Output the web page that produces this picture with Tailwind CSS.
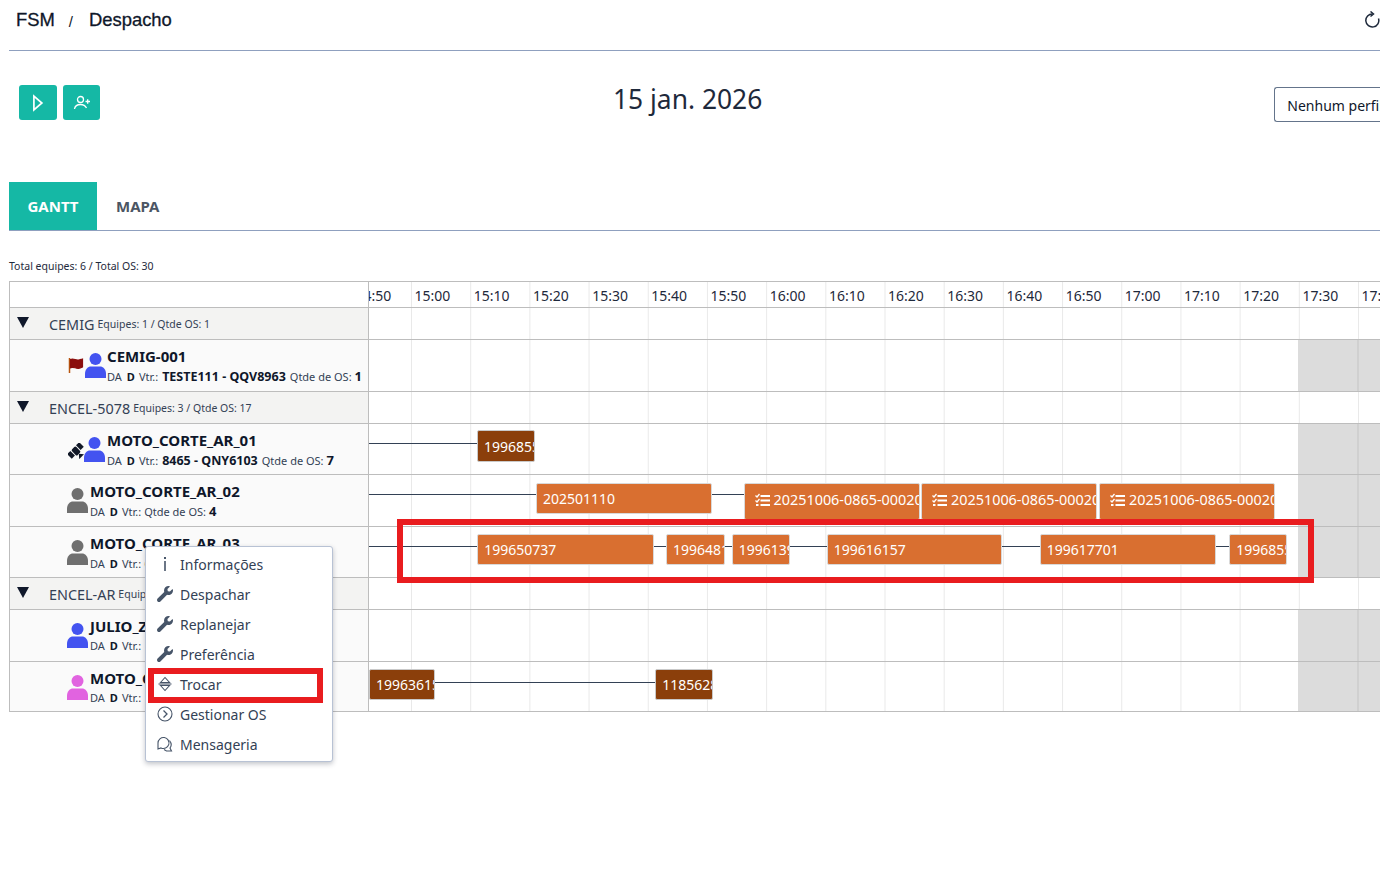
<!DOCTYPE html>
<html lang="pt-BR">
	<head>
		<meta charset="UTF-8" />
		<title>FSM - Despacho</title>
		<script src="https://cdn.jsdelivr.net/npm/@tailwindcss/browser@4"></script>
	</head>
	<body class="relative w-[1380px] h-[872px] overflow-hidden bg-white font-['Noto_Sans',sans-serif] text-[#0f172a]">
		<!-- breadcrumb -->
		<div class="ml-[9px] h-[51px] border-b border-[#8fa0bf] flex items-start pt-[8px] pl-[7px] font-['Liberation_Sans',sans-serif] text-[18.4px] leading-[24px] [-webkit-text-stroke:0.3px_#0f172a]">
			<span>FSM</span>
			<span class="ml-[14px] text-[15px] [-webkit-text-stroke:0px] pt-[2px]">/</span>
			<span class="ml-[16px]">Despacho</span>
			<svg class="ml-auto mt-[3px] mr-[-1px] w-[18px] h-[18px] shrink-0" viewBox="0 0 18 18" fill="none" stroke="#1e293b" stroke-width="1.5"><path d="M9.500 3A6.500 6.500 0 1 0 15.500 7.500" /><path d="M7.500 .5l3 2.500-3 2.500" /></svg>
		</div>

		<!-- toolbar -->
		<div class="flex h-[131px] pl-[19px] items-start">
			<button class="mt-[34px] w-[38px] h-[35px] shrink-0 rounded-[3px] bg-[#15b8a5] flex items-center justify-center">
				<svg class="w-[14px] h-[18px]" viewBox="0 0 14 18" fill="none" stroke="white" stroke-width="1.700"><path d="M2.900 2v14l8-7z" /></svg>
			</button>
			<button class="mt-[34px] ml-[6px] w-[37px] h-[35px] shrink-0 rounded-[3px] bg-[#15b8a5] flex items-center justify-center">
				<svg class="w-[18px] h-[16px]" viewBox="0 0 18 16" fill="none" stroke="white" stroke-width="1.300"><circle cx="7.500" cy="4.500" r="3" /><path d="M1.500 14c.5-3 3-4.500 6-4.500s5 1.500 6 3.500" /><path d="M12.500 6.500h4.500M14.700 4.300v4.500" /></svg>
			</button>
			<div class="ml-[513px] mt-[30px] text-[26.400px] leading-[36px] text-[#1e293b] whitespace-nowrap shrink-0">15 jan. 2026</div>
			<div class="ml-[512px] mt-[36px] w-[106px] h-[35px] shrink-0 border border-r-0 border-[#64748b] rounded-l-[3px] pl-[12px] pt-[1px] flex items-center text-[14px] whitespace-nowrap overflow-hidden">Nenhum perfil selecionado</div>
		</div>

		<!-- tabs -->
		<div class="ml-[9px] h-[49px] border-b border-[#8fa0bf] flex text-[15px] font-bold">
			<div class="w-[88px] bg-[#15b8a5] text-white flex items-center justify-center">GANTT</div>
			<div class="ml-[19px] flex items-center text-[#4b5563]">MAPA</div>
		</div>

		<div class="ml-[9px] mt-[28px] h-[14px] text-[10.500px] leading-[14px] text-[#1e293b]">Total equipes: 6 / Total OS: 30</div>

		<!-- gantt -->
		<div class="ml-[9px] mt-[8px] border-t border-l border-[#bdbdbd]">
			<div class="flex h-[26px] border-b border-[#bdbdbd]">
				<div class="w-[359px] shrink-0 border-r border-[#bdbdbd]"></div>
				<div class="flex-1 relative overflow-hidden bg-[linear-gradient(to_right,#e9e9e9_1.3px,transparent_1.3px)] bg-[length:59.2px_100%] bg-[position:42px_0] flex text-[14px] leading-[28px] text-[#1e293b] whitespace-nowrap">
					<div class="flex ml-[-13.600px]">
						<span class="w-[59.200px] shrink-0">14:50</span>
						<span class="w-[59.200px] shrink-0">15:00</span>
						<span class="w-[59.200px] shrink-0">15:10</span>
						<span class="w-[59.200px] shrink-0">15:20</span>
						<span class="w-[59.200px] shrink-0">15:30</span>
						<span class="w-[59.200px] shrink-0">15:40</span>
						<span class="w-[59.200px] shrink-0">15:50</span>
						<span class="w-[59.200px] shrink-0">16:00</span>
						<span class="w-[59.200px] shrink-0">16:10</span>
						<span class="w-[59.200px] shrink-0">16:20</span>
						<span class="w-[59.200px] shrink-0">16:30</span>
						<span class="w-[59.200px] shrink-0">16:40</span>
						<span class="w-[59.200px] shrink-0">16:50</span>
						<span class="w-[59.200px] shrink-0">17:00</span>
						<span class="w-[59.200px] shrink-0">17:10</span>
						<span class="w-[59.200px] shrink-0">17:20</span>
						<span class="w-[59.200px] shrink-0">17:30</span>
						<span class="w-[59.200px] shrink-0">17:40</span>
					</div>
				</div>
			</div>

			<!-- CEMIG -->
			<div class="flex h-[32px] border-b border-[#bdbdbd]">
				<div class="w-[359px] shrink-0 border-r border-[#bdbdbd] bg-[#f3f3f2] flex items-center pl-[7px] pt-[2px] whitespace-nowrap">
					<svg class="w-[12px] h-[11px] mt-[-5px]" viewBox="0 0 12 11"><path d="M0 0h12L6 11z" fill="#0f172a" /></svg>
					<span class="ml-[20px] text-[14.400px] text-[#334155]">CEMIG</span>
					<span class="ml-[3px] text-[10.500px] mt-[1px] text-[#334155]">Equipes: 1 / Qtde OS: 1</span>
				</div>
				<div class="flex-1 bg-[linear-gradient(to_right,#e9e9e9_1.3px,transparent_1.3px)] bg-[length:59.2px_100%] bg-[position:42px_0]"></div>
			</div>
			<div class="flex h-[52px] border-b border-[#bdbdbd]">
				<div class="w-[359px] shrink-0 border-r border-[#bdbdbd] bg-[#fafafa] flex pl-[57px] pt-[5px] whitespace-nowrap">
					<svg class="w-[16px] h-[15px] mt-[13px] ml-[1px]" viewBox="0 0 16 15"><path d="M1.500 0v15" stroke="#b8560f" stroke-width="1.500" /><path d="M2.500 1.500c3-1.500 5 1 8 .5 1.500-.2 3-.8 4-1v8c-1.500.8-3 1.300-4 1.300-3 .3-5-2-8-.5z" fill="#8b0e0e" stroke="#8b0e0e" stroke-width="1.200" /></svg>
					<svg class="w-[21px] h-[25px] ml-[1px] mt-[8px]" viewBox="0 0 21 25"><circle cx="10.500" cy="6" r="6" fill="#4353f0" /><path d="M0 25v-4c0-5 3-7.500 6-7.500h9c3 0 6 2.500 6 7.500v4z" fill="#4353f0" /></svg>
					<div class="ml-[1px]">
						<div class="text-[15px] font-bold leading-[23px]">CEMIG-001</div>
						<div class="flex items-baseline text-[11px] leading-[16px] text-[#334155]">DA <b class="ml-[5px] text-[#0f172a]">D</b> <span class="ml-[4px]">Vtr.:</span> <b class="ml-[4px] text-[12.500px] text-[#0f172a]">TESTE111 - QQV8963</b> <span class="ml-[4px]">Qtde de OS:</span> <b class="ml-[3px] text-[13px] text-[#0f172a]">1</b></div>
					</div>
				</div>
				<div class="relative flex-1 bg-[linear-gradient(to_right,#e9e9e9_1.3px,transparent_1.3px)] bg-[length:59.2px_100%] bg-[position:42px_0]">
					<div class="absolute inset-y-0 left-[929px] right-0 bg-[#dcdcdc] flex"><div class="ml-[59px] w-[2px] bg-[#d0d0d0]"></div></div>
				</div>
			</div>

			<!-- ENCEL-5078 -->
			<div class="flex h-[32px] border-b border-[#bdbdbd]">
				<div class="w-[359px] shrink-0 border-r border-[#bdbdbd] bg-[#f3f3f2] flex items-center pl-[7px] pt-[2px] whitespace-nowrap">
					<svg class="w-[12px] h-[11px] mt-[-5px]" viewBox="0 0 12 11"><path d="M0 0h12L6 11z" fill="#0f172a" /></svg>
					<span class="ml-[20px] text-[14.400px] text-[#334155]">ENCEL-5078</span>
					<span class="ml-[3px] text-[10.500px] mt-[1px] text-[#334155]">Equipes: 3 / Qtde OS: 17</span>
				</div>
				<div class="flex-1 bg-[linear-gradient(to_right,#e9e9e9_1.3px,transparent_1.3px)] bg-[length:59.2px_100%] bg-[position:42px_0]"></div>
			</div>
			<div class="flex h-[51px] border-b border-[#bdbdbd]">
				<div class="w-[359px] shrink-0 border-r border-[#bdbdbd] bg-[#fafafa] flex pl-[57px] pt-[5px] whitespace-nowrap">
					<svg class="w-[16px] h-[16px] mt-[14px] ml-[1px]" viewBox="0 0 16 16" fill="#111827"><g transform="rotate(-45 8 8)"><rect x="5" y="4" width="6" height="8" rx="1.500" /><rect x="-.5" y="4" width="4.500" height="6.500" /><rect x="12" y="4" width="4.500" height="6.500" /><path d="M4.500 16h7l-3.500-4z" /></g></svg>
					<svg class="w-[21px] h-[25px] mt-[8px]" viewBox="0 0 21 25"><circle cx="10.500" cy="6" r="6" fill="#4353f0" /><path d="M0 25v-4c0-5 3-7.500 6-7.500h9c3 0 6 2.500 6 7.500v4z" fill="#4353f0" /></svg>
					<div class="ml-[2px]">
						<div class="text-[15px] font-bold leading-[23px]">MOTO_CORTE_AR_01</div>
						<div class="flex items-baseline text-[11px] leading-[16px] text-[#334155]">DA <b class="ml-[5px] text-[#0f172a]">D</b> <span class="ml-[4px]">Vtr.:</span> <b class="ml-[4px] text-[12.500px] text-[#0f172a]">8465 - QNY6103</b> <span class="ml-[4px]">Qtde de OS:</span> <b class="ml-[3px] text-[13px] text-[#0f172a]">7</b></div>
					</div>
				</div>
				<div class="relative flex-1 bg-[linear-gradient(to_right,#e9e9e9_1.3px,transparent_1.3px)] bg-[length:59.2px_100%] bg-[position:42px_0]">
					<div class="absolute inset-y-0 left-[929px] right-0 bg-[#dcdcdc] flex"><div class="ml-[59px] w-[2px] bg-[#d0d0d0]"></div></div>
					<div class="absolute left-0 top-[19px] w-[108px] h-[1px] bg-[#334155]"></div>
					<div class="absolute left-[108px] top-[6px] w-[58px] h-[32px] rounded-[2px] border border-[#c9c9c9] bg-[#8b3f0b] text-white text-[14px] leading-[31px] pl-[6px] overflow-hidden whitespace-nowrap">199685590</div>
				</div>
			</div>
			<div class="flex h-[52px] border-b border-[#bdbdbd]">
				<div class="w-[359px] shrink-0 border-r border-[#bdbdbd] bg-[#fafafa] flex pl-[57px] pt-[5px] whitespace-nowrap">
					<svg class="w-[21px] h-[25px] mt-[8px]" viewBox="0 0 21 25"><circle cx="10.500" cy="6" r="6" fill="#6f6f6f" /><path d="M0 25v-4c0-5 3-7.500 6-7.500h9c3 0 6 2.500 6 7.500v4z" fill="#6f6f6f" /></svg>
					<div class="ml-[2px]">
						<div class="text-[15px] font-bold leading-[23px]">MOTO_CORTE_AR_02</div>
						<div class="flex items-baseline text-[11px] leading-[16px] text-[#334155]">DA <b class="ml-[5px] text-[#0f172a]">D</b> <span class="ml-[4px]">Vtr.:</span> <span class="ml-[3px]">Qtde de OS:</span> <b class="ml-[3px] text-[13px] text-[#0f172a]">4</b></div>
					</div>
				</div>
				<div class="relative flex-1 bg-[linear-gradient(to_right,#e9e9e9_1.3px,transparent_1.3px)] bg-[length:59.2px_100%] bg-[position:42px_0]">
					<div class="absolute inset-y-0 left-[929px] right-0 bg-[#dcdcdc] flex"><div class="ml-[59px] w-[2px] bg-[#d0d0d0]"></div></div>
					<div class="absolute left-0 top-[19px] w-[375px] h-[1px] bg-[#334155]"></div>
					<div class="absolute left-[167px] top-[8px] w-[176px] h-[31px] rounded-[2px] border border-[#d9d9d9] bg-[#d96f30] text-white text-[14px] leading-[29px] pl-[6px] overflow-hidden whitespace-nowrap">202501110</div>
					<div class="absolute left-[374.500px] top-[8px] w-[176px] h-[37px] rounded-[2px] border border-[#d9d9d9] bg-[#d96f30] text-white text-[14.400px] leading-[32px] pl-[10px] overflow-hidden whitespace-nowrap flex items-start">
						<svg class="w-[15px] h-[14px] mt-[9px] mr-[4px] shrink-0" viewBox="0 0 15 14" fill="none" stroke="white" stroke-width="2"><path d="M5.500 3h9.500M5.500 7.500h9.500M5.500 12h9.500" /><path d="M.5 2.500l1.500 1.500 2.500-3" stroke-width="1.300" /><path d="M.5 7.500l1.500 1.500 2.500-3" stroke-width="1.300" /><path d="M1 12h2.500" /></svg>20251006-0865-00020
					</div>
					<div class="absolute left-[552px] top-[8px] w-[176px] h-[37px] rounded-[2px] border border-[#d9d9d9] bg-[#d96f30] text-white text-[14.400px] leading-[32px] pl-[10px] overflow-hidden whitespace-nowrap flex items-start">
						<svg class="w-[15px] h-[14px] mt-[9px] mr-[4px] shrink-0" viewBox="0 0 15 14" fill="none" stroke="white" stroke-width="2"><path d="M5.500 3h9.500M5.500 7.500h9.500M5.500 12h9.500" /><path d="M.5 2.500l1.500 1.500 2.500-3" stroke-width="1.300" /><path d="M.5 7.500l1.500 1.500 2.500-3" stroke-width="1.300" /><path d="M1 12h2.500" /></svg>20251006-0865-00020
					</div>
					<div class="absolute left-[730px] top-[8px] w-[176px] h-[37px] rounded-[2px] border border-[#d9d9d9] bg-[#d96f30] text-white text-[14.400px] leading-[32px] pl-[10px] overflow-hidden whitespace-nowrap flex items-start">
						<svg class="w-[15px] h-[14px] mt-[9px] mr-[4px] shrink-0" viewBox="0 0 15 14" fill="none" stroke="white" stroke-width="2"><path d="M5.500 3h9.500M5.500 7.500h9.500M5.500 12h9.500" /><path d="M.5 2.500l1.500 1.500 2.500-3" stroke-width="1.300" /><path d="M.5 7.500l1.500 1.500 2.500-3" stroke-width="1.300" /><path d="M1 12h2.500" /></svg>20251006-0865-00020
					</div>
				</div>
			</div>
			<div class="flex h-[51px] border-b border-[#bdbdbd]">
				<div class="w-[359px] shrink-0 border-r border-[#bdbdbd] bg-[#fafafa] flex pl-[57px] pt-[5px] whitespace-nowrap">
					<svg class="w-[21px] h-[25px] mt-[8px]" viewBox="0 0 21 25"><circle cx="10.500" cy="6" r="6" fill="#6f6f6f" /><path d="M0 25v-4c0-5 3-7.500 6-7.500h9c3 0 6 2.500 6 7.500v4z" fill="#6f6f6f" /></svg>
					<div class="ml-[2px]">
						<div class="text-[15px] font-bold leading-[23px]">MOTO_CORTE_AR_03</div>
						<div class="flex items-baseline text-[11px] leading-[16px] text-[#334155]">DA <b class="ml-[5px] text-[#0f172a]">D</b> <span class="ml-[4px]">Vtr.:</span> <span class="ml-[3px]">Qtde de OS:</span> <b class="ml-[3px] text-[13px] text-[#0f172a]">6</b></div>
					</div>
				</div>
				<div class="relative flex-1 bg-[linear-gradient(to_right,#e9e9e9_1.3px,transparent_1.3px)] bg-[length:59.2px_100%] bg-[position:42px_0]">
					<div class="absolute inset-y-0 left-[929px] right-0 bg-[#dcdcdc] flex"><div class="ml-[59px] w-[2px] bg-[#d0d0d0]"></div></div>
					<div class="absolute left-0 top-[19px] w-[860px] h-[1px] bg-[#334155]"></div>
					<div class="absolute left-[108.300px] top-[6.500px] w-[176.400px] h-[31px] rounded-[2px] border border-[#d9d9d9] bg-[#d96f30] text-white text-[14px] leading-[29px] pl-[6px] overflow-hidden whitespace-nowrap">199650737</div>
					<div class="absolute left-[297px] top-[6.500px] w-[59px] h-[31px] rounded-[2px] border border-[#d9d9d9] bg-[#d96f30] text-white text-[14px] leading-[29px] pl-[6px] overflow-hidden whitespace-nowrap">199648112</div>
					<div class="absolute left-[362.700px] top-[6.500px] w-[58.300px] h-[31px] rounded-[2px] border border-[#d9d9d9] bg-[#d96f30] text-white text-[14px] leading-[29px] pl-[6px] overflow-hidden whitespace-nowrap">199613900</div>
					<div class="absolute left-[457.700px] top-[6.500px] w-[175.600px] h-[31px] rounded-[2px] border border-[#d9d9d9] bg-[#d96f30] text-white text-[14px] leading-[29px] pl-[6px] overflow-hidden whitespace-nowrap">199616157</div>
					<div class="absolute left-[670.700px] top-[6.500px] w-[176px] h-[31px] rounded-[2px] border border-[#d9d9d9] bg-[#d96f30] text-white text-[14px] leading-[29px] pl-[6px] overflow-hidden whitespace-nowrap">199617701</div>
					<div class="absolute left-[860.300px] top-[6.500px] w-[58px] h-[31px] rounded-[2px] border border-[#d9d9d9] bg-[#d96f30] text-white text-[14px] leading-[29px] pl-[6px] overflow-hidden whitespace-nowrap">199685590</div>
				</div>
			</div>

			<!-- ENCEL-AR -->
			<div class="flex h-[32px] border-b border-[#bdbdbd]">
				<div class="w-[359px] shrink-0 border-r border-[#bdbdbd] bg-[#f3f3f2] flex items-center pl-[7px] pt-[2px] whitespace-nowrap">
					<svg class="w-[12px] h-[11px] mt-[-5px]" viewBox="0 0 12 11"><path d="M0 0h12L6 11z" fill="#0f172a" /></svg>
					<span class="ml-[20px] text-[14.400px] text-[#334155]">ENCEL-AR</span>
					<span class="ml-[3px] text-[10.500px] mt-[1px] text-[#334155]">Equipes: 2 / Qtde OS: 12</span>
				</div>
				<div class="flex-1 bg-[linear-gradient(to_right,#e9e9e9_1.3px,transparent_1.3px)] bg-[length:59.2px_100%] bg-[position:42px_0]"></div>
			</div>
			<div class="flex h-[52px] border-b border-[#bdbdbd]">
				<div class="w-[359px] shrink-0 border-r border-[#bdbdbd] bg-[#fafafa] flex pl-[57px] pt-[5px] whitespace-nowrap">
					<svg class="w-[21px] h-[25px] mt-[8px]" viewBox="0 0 21 25"><circle cx="10.500" cy="6" r="6" fill="#4353f0" /><path d="M0 25v-4c0-5 3-7.500 6-7.500h9c3 0 6 2.500 6 7.500v4z" fill="#4353f0" /></svg>
					<div class="ml-[2px]">
						<div class="text-[15px] font-bold leading-[23px]">JULIO_ZANATTA</div>
						<div class="flex items-baseline text-[11px] leading-[16px] text-[#334155]">DA <b class="ml-[5px] text-[#0f172a]">D</b> <span class="ml-[4px]">Vtr.:</span> <b class="ml-[4px] text-[12.500px] text-[#0f172a]">9021</b></div>
					</div>
				</div>
				<div class="relative flex-1 bg-[linear-gradient(to_right,#e9e9e9_1.3px,transparent_1.3px)] bg-[length:59.2px_100%] bg-[position:42px_0]">
					<div class="absolute inset-y-0 left-[929px] right-0 bg-[#dcdcdc] flex"><div class="ml-[59px] w-[2px] bg-[#d0d0d0]"></div></div>
				</div>
			</div>
			<div class="flex h-[50px] border-b border-[#bdbdbd]">
				<div class="w-[359px] shrink-0 border-r border-[#bdbdbd] bg-[#fafafa] flex pl-[57px] pt-[5px] whitespace-nowrap">
					<svg class="w-[21px] h-[25px] mt-[8px]" viewBox="0 0 21 25"><circle cx="10.500" cy="6" r="6" fill="#e163e0" /><path d="M0 25v-4c0-5 3-7.500 6-7.500h9c3 0 6 2.500 6 7.500v4z" fill="#e163e0" /></svg>
					<div class="ml-[2px]">
						<div class="text-[15px] font-bold leading-[23px]">MOTO_CORTE_AR_04</div>
						<div class="flex items-baseline text-[11px] leading-[16px] text-[#334155]">DA <b class="ml-[5px] text-[#0f172a]">D</b> <span class="ml-[4px]">Vtr.:</span> <b class="ml-[4px] text-[12.500px] text-[#0f172a]">9034</b></div>
					</div>
				</div>
				<div class="relative flex-1 bg-[linear-gradient(to_right,#e9e9e9_1.3px,transparent_1.3px)] bg-[length:59.2px_100%] bg-[position:42px_0]">
					<div class="absolute inset-y-0 left-[929px] right-0 bg-[#dcdcdc] flex"><div class="ml-[59px] w-[2px] bg-[#d0d0d0]"></div></div>
					<div class="absolute left-[60px] top-[20px] w-[230px] h-[1px] bg-[#334155]"></div>
					<div class="absolute left-0 top-[7px] w-[65.500px] h-[31px] rounded-[2px] border border-[#c9c9c9] bg-[#8b3f0b] text-white text-[14px] leading-[29px] pl-[6px] overflow-hidden whitespace-nowrap">199636150</div>
					<div class="absolute left-[286.300px] top-[7px] w-[58px] h-[31px] rounded-[2px] border border-[#c9c9c9] bg-[#8b3f0b] text-white text-[14px] leading-[29px] pl-[6px] overflow-hidden whitespace-nowrap">118562800</div>
				</div>
			</div>
		</div>

		<!-- context menu -->
		<div class="absolute left-[145px] top-[546px] w-[188px] h-[216px] bg-white border border-[#b8c2d4] rounded-[3px] shadow-[0_2px_5px_rgba(15,23,42,0.25)] pt-[2px] text-[14px] text-[#334155]">
			<div class="h-[30px] flex items-center pl-[11px]">
				<svg class="w-[16px] h-[16px] mr-[7px]" viewBox="0 0 16 16" fill="#475569"><rect x="7" y="1" width="2" height="2" /><rect x="7.200" y="5" width="1.600" height="10" /></svg>Informações
			</div>
			<div class="h-[30px] flex items-center pl-[11px]">
				<svg class="w-[16px] h-[16px] mr-[7px]" viewBox="0 0 512 512" fill="#475569"><path d="M507.73 109.1c-2.24-9.03-13.54-12.09-20.12-5.51l-74.36 74.36-67.88-11.31-11.31-67.88 74.36-74.36c6.62-6.62 3.43-17.9-5.66-20.16-47.38-11.74-99.55.91-136.58 37.93-39.64 39.64-50.55 97.1-34.05 147.2L18.74 402.76c-24.99 24.99-24.99 65.51 0 90.5 24.99 24.99 65.51 24.99 90.5 0l213.21-213.21c50.12 16.71 107.47 5.68 147.37-34.22 37.07-37.07 49.7-89.32 37.91-136.73z" /></svg>Despachar
			</div>
			<div class="h-[30px] flex items-center pl-[11px]">
				<svg class="w-[16px] h-[16px] mr-[7px]" viewBox="0 0 512 512" fill="#475569"><path d="M507.73 109.1c-2.24-9.03-13.54-12.09-20.12-5.51l-74.36 74.36-67.88-11.31-11.31-67.88 74.36-74.36c6.62-6.62 3.43-17.9-5.66-20.16-47.38-11.74-99.55.91-136.58 37.93-39.64 39.64-50.55 97.1-34.05 147.2L18.74 402.76c-24.99 24.99-24.99 65.51 0 90.5 24.99 24.99 65.51 24.99 90.5 0l213.21-213.21c50.12 16.71 107.47 5.68 147.37-34.22 37.07-37.07 49.7-89.32 37.91-136.73z" /></svg>Replanejar
			</div>
			<div class="h-[30px] flex items-center pl-[11px]">
				<svg class="w-[16px] h-[16px] mr-[7px]" viewBox="0 0 512 512" fill="#475569"><path d="M507.73 109.1c-2.24-9.03-13.54-12.09-20.12-5.51l-74.36 74.36-67.88-11.31-11.31-67.88 74.36-74.36c6.62-6.62 3.43-17.9-5.66-20.16-47.38-11.74-99.55.91-136.58 37.93-39.64 39.64-50.55 97.1-34.05 147.2L18.74 402.76c-24.99 24.99-24.99 65.51 0 90.5 24.99 24.99 65.51 24.99 90.5 0l213.21-213.21c50.12 16.71 107.47 5.68 147.37-34.22 37.07-37.07 49.7-89.32 37.91-136.73z" /></svg>Preferência
			</div>
			<div class="h-[30px] flex items-center pl-[11px]">
				<svg class="w-[16px] h-[16px] mr-[7px]" viewBox="0 0 16 16" fill="none" stroke="#475569" stroke-width="1.100"><path d="M3.500 6.500L8 1.500l4.500 5zM3.500 9.500L8 14.500l4.500-5z" /><path d="M1.500 8h13" /></svg>Trocar
			</div>
			<div class="h-[30px] flex items-center pl-[11px]">
				<svg class="w-[16px] h-[16px] mr-[7px]" viewBox="0 0 16 16" fill="none" stroke="#475569" stroke-width="1.100"><circle cx="8" cy="8" r="7" /><path d="M6.500 4.500L10 8l-3.500 3.500" stroke-width="1.300" /></svg>Gestionar OS
			</div>
			<div class="h-[30px] flex items-center pl-[11px]">
				<svg class="w-[16px] h-[16px] mr-[7px]" viewBox="0 0 16 16" fill="none" stroke="#475569" stroke-width="1.100"><path d="M1 7a5.500 5.500 0 1 1 3 4.900l-3 1z" /><path d="M12.500 4.500c2 2.500 2 5.500.5 7.500l1.500 3h-5l-2.500-1.500" /></svg>Mensageria
			</div>
		</div>

		<!-- highlight boxes -->
		<div class="absolute left-[397px] top-[519px] w-[917px] h-[64px] border-[6px] border-[#e91c1f]"></div>
		<div class="absolute left-[148px] top-[668px] w-[175px] h-[35px] border-[6px] border-[#e91c1f]"></div>
	</body>
</html>
